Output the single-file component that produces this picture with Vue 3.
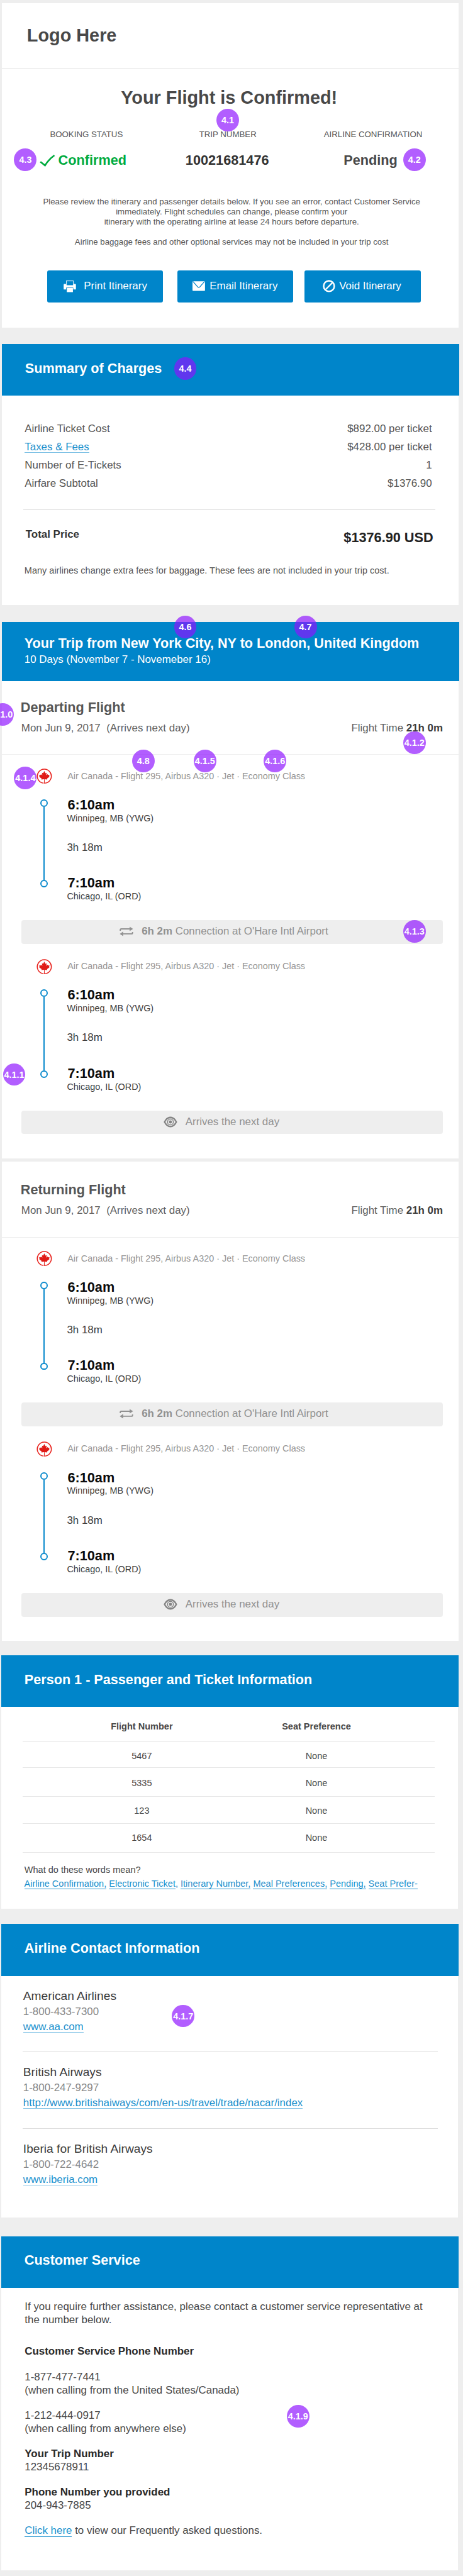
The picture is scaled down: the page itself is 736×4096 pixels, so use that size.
<script setup>
const flights = [
  { id: 'out', title: 'Departing Flight' },
  { id: 'back', title: 'Returning Flight' },
]
const stops = ['connection', 'arrival']
const charges = [
  { label: 'Airline Ticket Cost', value: '$892.00 per ticket' },
  { label: 'Taxes & Fees', value: '$428.00 per ticket', link: true },
  { label: 'Number of E-Tickets', value: '1' },
  { label: 'Airfare Subtotal', value: '$1376.90' },
]
const seats = [
  { flight: '5467', pref: 'None' },
  { flight: '5335', pref: 'None' },
  { flight: '123', pref: 'None' },
  { flight: '1654', pref: 'None' },
]
const airlines = [
  { name: 'American Airlines', phone: '1-800-433-7300', url: 'www.aa.com' },
  { name: 'British Airways', phone: '1-800-247-9297', url: 'http://www.britishaiways/com/en-us/travel/trade/nacar/index' },
  { name: 'Iberia for British Airways', phone: '1-800-722-4642', url: 'www.iberia.com' },
]
const notes = [
  { t: '4.1', x: 363.9, y: 192 },
  { t: '4.3', x: 40.6, y: 255.2 },
  { t: '4.2', x: 662.1, y: 255.2 },
  { t: '4.4', x: 295.9, y: 588.7 },
  { t: '4.6', x: 295.9, y: 1002 },
  { t: '4.7', x: 488, y: 1002 },
  { t: '4.1.0', x: 4.2, y: 1142 },
  { t: '4.1.2', x: 662.1, y: 1187 },
  { t: '4.8', x: 228.9, y: 1216 },
  { t: '4.1.5', x: 327.5, y: 1216 },
  { t: '4.1.6', x: 439.4, y: 1216 },
  { t: '4.1.4', x: 40.6, y: 1243 },
  { t: '4.1.3', x: 662.1, y: 1488.3 },
  { t: '4.1.1', x: 22.6, y: 1717 },
  { t: '4.1.7', x: 292.6, y: 3221.3 },
  { t: '4.1.9', x: 476.2, y: 3860.8 },
]
</script>

<template>
  <main class="page">
    <section class="card hero">
      <header class="brand">Logo Here</header>
      <h1>Your Flight is Confirmed!</h1>
      <div class="status">
        <div class="cell one">
          <span class="label">BOOKING STATUS</span>
          <strong class="value ok">
            <svg width="25" height="19" viewBox="0 0 25 19"><path d="M1.2 11.2 L8.6 17.2 Q14 8 23.6 1" fill="none" stroke="#00ab3e" stroke-width="2.6" /></svg>
            <span>Confirmed</span>
          </strong>
        </div>
        <div class="cell two">
          <span class="label">TRIP NUMBER</span>
          <strong class="value dark">10021681476</strong>
        </div>
        <div class="cell three">
          <span class="label">AIRLINE CONFIRMATION</span>
          <strong class="value">Pending</strong>
        </div>
      </div>
      <p class="intro">
        Please review the itinerary and passenger details below. If you see an error, contact Customer Service<br />immediately. Flight schedules can change, please confirm your<br />itinerary with the operating airline at lease 24 hours before departure.<br /><br />Airline baggage fees and other optional services may not be included in your trip cost
      </p>
      <div class="actions">
        <button class="btn print">
          <svg width="20" height="19" viewBox="0 0 20 19">
            <rect x="4.6" y=".6" width="11" height="8" fill="none" stroke="#d9ecf7" stroke-width="1.1" />
            <path d="M1.4 5.6h2.6v2h12.2v-2h2.4q1.2 0 1.2 1.2v7.6h-4.2v-3.2H4.2v3.2H.2V6.8q0-1.2 1.2-1.2z" fill="#fff" />
            <rect x="5.2" y="12" width="9.8" height="6.6" fill="#fff" />
          </svg>
          <span>Print Itinerary</span>
        </button>
        <button class="btn email">
          <svg width="20" height="16" viewBox="0 0 20 16">
            <rect x="0" y=".2" width="20" height="15.4" rx="1.2" fill="#fff" />
            <path d="M.8 .6L8.4 9.4Q10 11 11.6 9.4L19.2 .6" fill="none" stroke="#0085ca" stroke-width="1.3" />
          </svg>
          <span>Email Itinerary</span>
        </button>
        <button class="btn void">
          <svg width="20" height="20" viewBox="0 0 20 20">
            <circle cx="10" cy="10" r="8.5" fill="none" stroke="#fff" stroke-width="2.4" />
            <path d="M4.4 15.6L15.6 4.4" stroke="#fff" stroke-width="2.2" />
          </svg>
          <span>Void Itinerary</span>
        </button>
      </div>
    </section>

    <section class="card summary">
      <header class="bar"><h2>Summary of Charges</h2></header>
      <dl class="charges">
        <div v-for="c in charges" :key="c.label" class="charge">
          <dt><a v-if="c.link" class="thick">{{ c.label }}</a><template v-else>{{ c.label }}</template></dt>
          <dd>{{ c.value }}</dd>
        </div>
      </dl>
      <div class="total">
        <strong class="total-label">Total Price</strong>
        <strong class="total-value">$1376.90 USD</strong>
      </div>
      <p class="note">Many airlines change extra fees for baggage. These fees are not included in your trip cost.</p>
    </section>

    <template v-for="f in flights" :key="f.id">
      <section class="card trip" :class="f.id">
        <header v-if="f.id === 'out'" class="bar trip-bar">
          <h2>Your Trip from New York City, NY to London, United Kingdom</h2>
          <p>10 Days (November 7 - Novemeber 16)</p>
        </header>
        <div class="flight-head">
          <h3>{{ f.title }}</h3>
          <div class="flight-meta">
            <span>Mon Jun 9, 2017 &nbsp;(Arrives next day)</span>
            <span>Flight Time <b>21h 0m</b></span>
          </div>
        </div>
        <article v-for="s in stops" :key="s" class="leg">
          <div class="carrier">
            <svg width="25" height="25" viewBox="0 0 25 25">
              <path d="M11.2 23.4A11.2 11.2 0 1 1 13.8 23.4" fill="none" stroke="#e8211c" stroke-width="1.6" />
              <path d="M12.5 4L14.4 7.6L16.3 6.7L15.6 10.8L17.9 9L18.5 10.2L20.8 10L20.1 12.2L20.9 13L16.8 16.1L17.2 17.6L12.9 17.1L13.1 24H11.9L12.1 17.1L7.8 17.6L8.2 16.1L4.1 13L4.9 12.2L4.2 10L6.5 10.2L7.1 9L9.4 10.8L8.7 6.7L10.6 7.6Z" fill="#e01b17" />
            </svg>
            <span>Air Canada - Flight 295, Airbus A320 · Jet · Economy Class</span>
          </div>
          <div class="route">
            <div class="line"><i></i><b></b><i></i></div>
            <div class="times">
              <strong>6:10am</strong>
              <span class="place">Winnipeg, MB (YWG)</span>
              <span class="duration">3h 18m</span>
              <strong>7:10am</strong>
              <span class="place">Chicago, IL (ORD)</span>
            </div>
          </div>
          <div v-if="s === 'connection'" class="strip connection">
            <svg width="22" height="16" viewBox="0 0 22 16">
              <path d="M1.2 7V5.6Q1.200 4 2.800 4H17M20.800 9V10.400Q20.800 12 19.200 12H5" fill="none" stroke="#919191" stroke-width="1.900" />
              <path d="M16.200 .4L21.600 4L16.200 7.600ZM5.800 8.400L.4 12L5.800 15.600Z" fill="#919191" />
            </svg>
            <span><b>6h 2m</b> Connection at O'Hare Intl Airport</span>
          </div>
          <div v-else class="strip arrival">
            <svg width="22" height="18" viewBox="0 0 22 18">
              <path d="M1.6 9Q5.2 1.7 11 1.7T20.4 9Q16.8 16.3 11 16.3T1.6 9Z" fill="#eee" stroke="#858585" stroke-width="2.4" />
              <circle cx="11" cy="9" r="4.7" fill="none" stroke="#858585" stroke-width="1.4" />
              <circle cx="11" cy="9" r="2.5" fill="#858585" />
            </svg>
            <span>Arrives the next day</span>
          </div>
        </article>
      </section>
    </template>

    <section class="card low passenger">
      <header class="bar"><h2>Person 1 - Passenger and Ticket Information</h2></header>
      <div class="table">
        <div class="tr th"><span>Flight Number</span><span>Seat Preference</span></div>
        <div v-for="r in seats" :key="r.flight" class="tr"><span>{{ r.flight }}</span><span>{{ r.pref }}</span></div>
      </div>
      <p class="words">What do these words mean?</p>
      <p class="glossary"><a>Airline Confirmation,</a> <a>Electronic Ticket</a><em>,</em> <a>Itinerary Number,</a> <a>Meal Preferences,</a> <a>Pending,</a> <a>Seat Prefer-</a></p>
    </section>

    <section class="card low contact">
      <header class="bar"><h2>Airline Contact Information</h2></header>
      <div v-for="a in airlines" :key="a.name" class="airline">
        <h4>{{ a.name }}</h4>
        <p class="phone">{{ a.phone }}</p>
        <p><a class="thick">{{ a.url }}</a></p>
      </div>
    </section>

    <section class="card low service">
      <header class="bar"><h2>Customer Service</h2></header>
      <div class="help">
        <p>If you require further assistance, please contact a customer service representative at<br />the number below.</p>
        <p class="phones"><b>Customer Service Phone Number</b></p>
        <p>1-877-477-7441<br />(when calling from the United States/Canada)</p>
        <p>1-212-444-0917<br />(when calling from anywhere else)</p>
        <p><b>Your Trip Number</b><br />12345678911</p>
        <p><b>Phone Number you provided</b><br />204-943-7885</p>
        <p><a>Click here</a> to view our Frequently asked questions.</p>
      </div>
    </section>

    <span v-for="n in notes" :key="n.t" class="badge" :style="{ left: n.x - 18 + 'px', top: n.y - 18 + 'px' }">{{ n.t }}</span>
  </main>
</template>

<style>
html,
body {
  margin: 0;
  background: #eee;
  overflow: hidden;
}
</style>

<style scoped>
.page {
  position: relative;
  box-sizing: border-box;
  width: 740px;
  height: 4116px;
  padding-top: 5px;
  overflow: hidden;
  zoom: 0.9951;
  background: #eee;
  color: #555;
  font: 17px/20px "Liberation Sans", Arial, sans-serif;
}
h1, h2, h3, h4, p, dl, dd { margin: 0; }
.card {
  box-sizing: border-box;
  width: 730px;
  margin-left: 3px;
  background: #fff;
}
.low { margin-left: 2px; }
.bar {
  box-sizing: border-box;
  width: 730.5px;
  height: 82.5px;
  padding: 25.8px 0 0 37px;
  background: #0085ca;
  color: #fff;
}
h2, h3 { font-size: 21.75px; line-height: 26px; font-weight: bold; white-space: nowrap; }
a { color: #1a90cd; border-bottom: 1px solid #1a90cd; }
a.thick { border-bottom: 2px solid #80c2e5; }

.hero { height: 519px; }
.brand {
  box-sizing: border-box;
  height: 105px;
  padding: 35.7px 0 0 40px;
  border-bottom: 1.5px solid #e6e6e6;
  font-size: 29px;
  line-height: 34px;
  font-weight: bold;
  color: #484848;
}
h1 { padding: 29.6px 4px 0 0; font-size: 29px; line-height: 34px; text-align: center; color: #484848; }
.status { display: grid; grid-template-columns: 270px 182px 278px; margin-top: 33px; }
.cell { display: flex; flex-direction: column; align-items: center; gap: 21px; }
.three { padding-left: 4px; }
.label { font-size: 13.33px; line-height: 16px; color: #555; }
.value { display: flex; align-items: center; gap: 5px; font-size: 21.8px; line-height: 26px; color: #484848; margin-right: 8px; }
.ok { color: #00ab3e; margin-right: 11px; }
.dark { color: #333; margin-right: 2px; }
.intro { margin-top: 45px; padding-left: 4px; font-size: 13.33px; line-height: 16px; text-align: center; white-space: nowrap; }
.actions { display: flex; margin: 37.4px 0 0 72px; }
.btn {
  display: flex;
  align-items: center;
  box-sizing: border-box;
  width: 185.5px;
  height: 51px;
  padding: 0;
  border: 0;
  border-radius: 3px;
  background: #0085ca;
  color: #fff;
  font: 17px/20px "Liberation Sans", Arial, sans-serif;
}
.print { padding-left: 27px; gap: 12px; }
.email { padding-left: 25px; gap: 7px; margin: 0 18.4px 0 22.5px; }
.void { padding-left: 29px; gap: 6px; }

.summary { height: 417px; margin-top: 26px; }
.charges { padding: 42.6px 43px 0 36.5px; display: flex; flex-direction: column; gap: 9.2px; }
.charge { display: flex; justify-content: space-between; }
.charge a { display: inline-block; height: 18.5px; }
.total {
  display: flex;
  justify-content: space-between;
  align-items: flex-start;
  margin: 31.4px 38px 0 34px;
  padding: 29.5px 3px 0 4px;
  border-top: 1.5px solid #ddd;
}
.total-label { color: #333; }
.total-value { margin-top: 2px; font-size: 21.8px; line-height: 26px; color: #222; }
.note { margin: 30.8px 0 0 36px; font-size: 14.6px; line-height: 18px; white-space: nowrap; }

.out { height: 857px; margin-top: 27px; }
.back { height: 765.7px; margin-top: 5.3px; padding-top: 3px; }
.trip-bar { height: 94.3px; padding: 20.7px 0 0 36px; }
.trip-bar p { margin: 3.8px 0 0; }
.flight-head { box-sizing: border-box; height: 118px; padding: 29.1px 25.5px 0 30px; border-bottom: 1.5px solid #eee; }
h3 { color: #555; }
.flight-meta { display: flex; justify-content: space-between; margin: 10px 0 0 1px; color: #606060; }
.flight-meta b { color: #3c3c3c; }
.leg { box-sizing: border-box; height: 304px; padding-top: 22px; }
.carrier { display: flex; align-items: center; height: 25px; padding-left: 55.3px; gap: 24.4px; font-size: 14.5px; line-height: 18px; color: #959595; white-space: nowrap; }
.route { display: flex; height: 217px; box-sizing: border-box; }
.line { display: flex; flex-direction: column; align-items: center; width: 12px; height: 141px; margin: 24px 0 0 61px; }
.line i { box-sizing: border-box; flex: none; width: 12px; height: 12px; border: 2.3px solid #0d8bcd; border-radius: 50%; }
.line b { flex: 1; width: 2px; background: #0d8bcd; }
.times { display: flex; flex-direction: column; margin: 19.8px 0 0 31px; color: #3c3c3c; }
.times strong { font-size: 21.8px; line-height: 26px; color: #0c0c0c; margin-left: 1px; }
.place { font-size: 14.5px; line-height: 18px; }
.duration { margin: 27.5px 0 33.5px; color: #3c3c3c; }
.strip {
  display: flex;
  align-items: center;
  justify-content: center;
  box-sizing: border-box;
  height: 38px;
  margin: 0 26px 0 31.5px;
  border-radius: 4px;
  background: #eee;
  color: #919191;
}
.connection { gap: 13px; padding: 0 26px 1.4px 0; }
.arrival { gap: 13px; padding: 0 34px 1.4px 0; }

.passenger { height: 404.7px; margin-top: 23.3px; }
.table { width: 658px; margin-left: 34px; font-size: 14.6px; line-height: 18px; color: #484848; }
.tr { box-sizing: border-box; display: grid; grid-template-columns: 381px 177px; height: 45px; padding-top: 14px; border-bottom: 1.5px solid #e8e8e8; text-align: center; }
.th { height: 56px; padding-top: 22.5px; font-weight: bold; }
.tr:nth-child(2) { height: 41px; }
.tr:nth-child(3) { height: 46px; padding-top: 16.5px; }
.tr:nth-child(4) { height: 44px; }
.tr:nth-child(5) { height: 46px; }
.words { margin: 18.8px 0 0 37px; font-size: 14.6px; line-height: 18px; color: #484848; }
.glossary { margin: 4px 0 0 36.7px; font-size: 14.6px; line-height: 18px; white-space: nowrap; }
.glossary a { display: inline-block; height: 16px; }
.glossary em { font-style: normal; color: #1a90cd; }

.contact { height: 469px; margin-top: 24.6px; }
.airline { box-sizing: border-box; height: 122.5px; margin: 0 33px 0 34px; padding: 22px 0 0 1px; border-bottom: 1.5px solid #ddd; }
.airline + .airline { padding-top: 21.1px; }
.airline:last-child { border: 0; }
h4 { font-size: 19.3px; line-height: 22px; font-weight: normal; color: #3c3c3c; }
.airline p { margin-top: 4.3px; }
.airline .phone { margin-top: 4px; color: #888; }
.airline a { display: inline-block; height: 18px; }

.service { height: 533.7px; margin-top: 29.7px; }
.help { padding: 20.6px 0 0 37.5px; line-height: 20.45px; color: #484848; white-space: nowrap; }
.help b { color: #2a2a2a; }
.help p + p { margin-top: 20.45px; }
.help p + .phones { margin-top: 30.7px; }
.help a { display: inline-block; height: 18.5px; }

.badge {
  position: absolute;
  box-sizing: border-box;
  display: flex;
  justify-content: center;
  width: 36px;
  height: 36px;
  padding-top: 10px;
  border-radius: 50%;
  background: rgba(141, 17, 255, 0.68);
  color: #fff;
  font-size: 14.5px;
  line-height: 18px;
  font-weight: bold;
}
</style>
